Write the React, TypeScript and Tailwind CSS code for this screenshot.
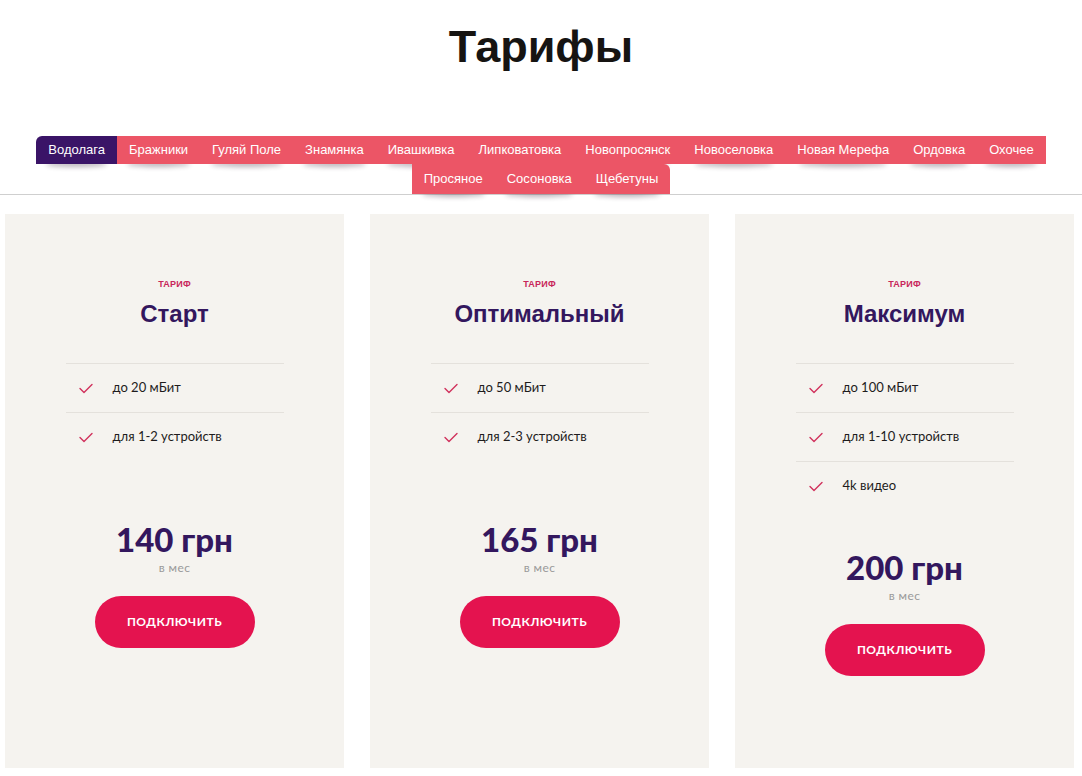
import React from "react";

const row1 = ["Водолага","Бражники","Гуляй Поле","Знамянка","Ивашкивка","Липковатовка","Новопросянск","Новоселовка","Новая Мерефа","Ордовка","Охочее"];
const row2 = ["Просяное","Сосоновка","Щебетуны"];

const plans = [
  { name: "Старт", items: ["до 20 мБит", "для 1-2 устройств"], price: "140 грн" },
  { name: "Оптимальный", items: ["до 50 мБит", "для 2-3 устройств"], price: "165 грн" },
  { name: "Максимум", items: ["до 100 мБит", "для 1-10 устройств", "4k видео"], price: "200 грн" },
];

function Tab({ label, active, cls }: { label: string; active?: boolean; cls?: string }) {
  return (
    <div className={"relative " + (cls || "")}>
      <span className="absolute left-[12%] right-[12%] bottom-[1px] h-[6px] rounded-[50%] shadow-[0_4px_5px_rgba(40,20,40,0.32)]" />
      <div
        className={
          "relative h-full px-[12px] flex items-center text-[13px] text-white whitespace-nowrap " +
          (active ? "bg-[#3a1467] " : "bg-[#ec5566] ") +
          (cls || "")
        }
      >
        {label}
      </div>
    </div>
  );
}

function Check() {
  return (
    <svg width="14" height="11" viewBox="0 0 14 11" fill="none">
      <path d="M1 5.5 L5 9.5 L13 1.5" stroke="#d0305c" strokeWidth="1.4" strokeLinecap="round" strokeLinejoin="round" />
    </svg>
  );
}

export default function App() {
  return (
    <div className="w-[1082px] min-h-[776px] bg-white" style={{ fontFamily: "'Liberation Sans', Arial, sans-serif" }}>
      <h1 className="text-center text-[45px] leading-[56px] font-bold text-[#161412] pt-[19px]">Тарифы</h1>
      <div className="mt-[61px] isolate">
        <div className="flex justify-center h-[28px]">
          {row1.map((t, i) => (
            <Tab
              key={t}
              label={t}
              active={i === 0}
              cls={i === 0 ? "rounded-tl-[6px]" : ""}
            />
          ))}
        </div>
        <div className="flex justify-center h-[30px]">
          {row2.map((t, i) => (
            <Tab key={t} label={t} cls={i === row2.length - 1 ? "rounded-tr-[6px]" : ""} />
          ))}
        </div>
      </div>
      <div className="h-px bg-[#cfcfcf]" />
      <div className="flex gap-[26px] pl-[5px] pt-[19px]">
        {plans.map((p) => (
          <div key={p.name} className="w-[339px] h-[554px] bg-[#f5f3ef] flex flex-col items-center pt-[64px]">
            <div className="text-[9px] leading-[12px] font-bold text-[#c8265a] tracking-[0.2px]">ТАРИФ</div>
            <div className="mt-[9px] text-[24px] leading-[30px] font-bold text-[#33175e]">{p.name}</div>
            <ul className="mt-[34px] w-[218px] min-h-[119px]" style={{ fontFamily: "Lato, 'Noto Sans', sans-serif" }}>
              {p.items.map((it) => (
                <li key={it} className="h-[49px] border-t border-[#e4e1dc] flex items-center pl-[13px] text-[13px] text-[#1e1c1c]">
                  <Check />
                  <span className="ml-[20px]">{it}</span>
                </li>
              ))}
            </ul>
            <div className="mt-[41px] text-[33px] leading-[32px] font-black text-[#33175e]" style={{ fontFamily: "Lato, 'Noto Sans', sans-serif" }}>
              {p.price}
            </div>
            <div className="mt-[6px] text-[12px] leading-[14px] text-[#9a9a9a] tracking-[0.4px]" style={{ fontFamily: "Lato, 'Noto Sans', sans-serif" }}>в мес</div>
            <button
              className="mt-[21px] w-[160px] h-[52px] rounded-full bg-[#e4134f] text-white text-[12px] font-bold tracking-[0.5px]"
              style={{ fontFamily: "Lato, 'Noto Sans', sans-serif" }}
            >
              ПОДКЛЮЧИТЬ
            </button>
          </div>
        ))}
      </div>
    </div>
  );
}
